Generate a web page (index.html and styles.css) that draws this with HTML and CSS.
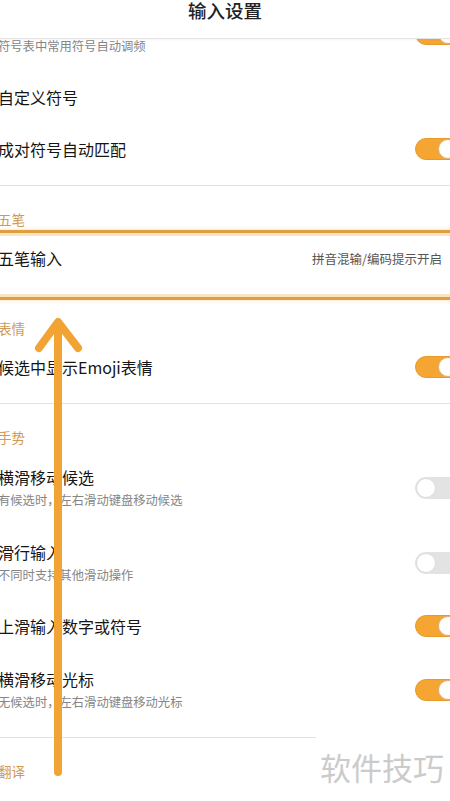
FILE: index.html
```html
<!DOCTYPE html>
<html lang="zh-CN">
  <head>
    <meta charset="UTF-8" />
    <meta name="viewport" content="width=device-width, initial-scale=1.0" />
    <title>输入设置</title>
    <link rel="stylesheet" href="styles.css">
  </head>
  <body>
    <div class="screen">
      <header class="topbar">输入设置</header>

      <div class="settings">
        <section class="group">
          <div class="row row-tall">
            <div class="text">
              <div class="title">符号自动调频</div>
              <div class="sub">符号表中常用符号自动调频</div>
            </div>
            <span class="switch on"></span>
          </div>
          <div class="row">
            <div class="text"><div class="title">自定义符号</div></div>
            <span class="chevron"></span>
          </div>
          <div class="row">
            <div class="text"><div class="title">成对符号自动匹配</div></div>
            <span class="switch on"></span>
          </div>
        </section>

        <section class="group">
          <div class="group-label">五笔</div>
          <div class="row highlighted">
            <div class="text"><div class="title">五笔输入</div></div>
            <span class="value">拼音混输/编码提示开启</span>
            <span class="chevron"></span>
          </div>
        </section>

        <section class="group">
          <div class="group-label">表情</div>
          <div class="row">
            <div class="text"><div class="title">候选中显示Emoji表情</div></div>
            <span class="switch on"></span>
          </div>
        </section>

        <section class="group">
          <div class="group-label">手势</div>
          <div class="row row-tall">
            <div class="text">
              <div class="title">横滑移动候选</div>
              <div class="sub">有候选时，左右滑动键盘移动候选</div>
            </div>
            <span class="switch"></span>
          </div>
          <div class="row row-tall">
            <div class="text">
              <div class="title">滑行输入</div>
              <div class="sub">不同时支持其他滑动操作</div>
            </div>
            <span class="switch"></span>
          </div>
          <div class="row">
            <div class="text"><div class="title">上滑输入数字或符号</div></div>
            <span class="switch on"></span>
          </div>
          <div class="row row-tall">
            <div class="text">
              <div class="title">横滑移动光标</div>
              <div class="sub">无候选时，左右滑动键盘移动光标</div>
            </div>
            <span class="switch on"></span>
          </div>
        </section>

        <section class="group last">
          <div class="group-label">翻译</div>
          <div class="row">
            <div class="text"><div class="title">中英翻译</div></div>
            <span class="chevron"></span>
          </div>
        </section>
      </div>

      <!-- hand drawn arrow on top of the screenshot -->
      <svg class="arrow" width="450" height="801" viewBox="0 0 450 801">
        <path d="M58 772 L58 326" />
        <path d="M39 348 L58 322 L78 348" />
      </svg>

      <div class="watermark">软件技巧</div>
    </div>
  </body>
</html>
```

FILE: styles.css
```css
html,
body {
  margin: 0;
  padding: 0;
  background: #fff;
  overflow: hidden;
}
body {
  font-family: "Noto Sans CJK SC", "Noto Sans", sans-serif;
  color: #151515;
}
.screen {
  position: relative;
  width: 450px;
  height: 801px;
  overflow: hidden;
  background: #fff;
}
.topbar {
  position: relative;
  z-index: 2;
  box-sizing: border-box;
  height: 39px;
  line-height: 20px;
  text-align: center;
  font-size: 18.5px;
  font-weight: 500;
  color: #222;
  background: #fff;
  border-bottom: 1px solid #e4e4e4;
  box-shadow: 0 1px 2px rgba(0, 0, 0, 0.04);
}
.settings {
  margin-top: -43px;
  margin-left: -2px;
}
.group {
  padding-bottom: 10px;
  border-bottom: 1px solid #e3e3e3;
}
.group.last {
  border-bottom: none;
}
.group-label {
  padding: 23px 0 3px;
  line-height: 20px;
  font-size: 13.5px;
  color: #cf9a55;
}
.row {
  display: flex;
  align-items: center;
  height: 52px;
}
.row-tall {
  height: 75px;
}
.text {
  flex: 1;
}
.title {
  font-size: 16px;
  line-height: 22px;
}
.sub {
  margin-top: 2px;
  font-size: 12.3px;
  line-height: 20px;
  color: #858585;
}
.value {
  margin-right: 5px;
  font-size: 12.5px;
  color: #555;
}
.chevron {
  width: 8px;
  height: 8px;
  margin-right: -5px;
  box-sizing: border-box;
  border-top: 1.5px solid #c4c4c4;
  border-right: 1.5px solid #c4c4c4;
  transform: rotate(45deg);
}
.switch {
  position: relative;
  box-sizing: border-box;
  width: 45px;
  height: 22px;
  margin-right: -10px;
  border-radius: 11px;
  background: #e3e3e3;
}
.switch::after {
  content: "";
  position: absolute;
  top: 1px;
  left: 1px;
  box-sizing: border-box;
  width: 20px;
  height: 20px;
  border-radius: 50%;
  background: #fff;
  border: 1px solid #dcdcdc;
}
.switch.on {
  background: #f5a632;
  border: 1px solid #e69a2c;
}
.switch.on::after {
  top: 0;
  left: auto;
  right: 1px;
  border-color: #d9b07a;
}
.highlighted {
  position: relative;
}
.highlighted::after {
  content: "";
  position: absolute;
  top: -2px;
  bottom: -16px;
  left: -10px;
  right: -10px;
  border: 3px solid #dd9e44;
  box-shadow: inset 0 0 0 3px #f8e5c0, 0 0 4px rgba(240, 175, 80, 0.45);
  pointer-events: none;
}
.arrow {
  position: absolute;
  top: 0;
  left: 0;
  z-index: 3;
  pointer-events: none;
}
.arrow path {
  fill: none;
  stroke: #f1a434;
  stroke-width: 8;
  stroke-linecap: round;
  stroke-linejoin: round;
}
.watermark {
  position: absolute;
  left: 316px;
  top: 725px;
  right: 0;
  bottom: 0;
  z-index: 3;
  box-sizing: border-box;
  padding: 24px 0 0 4px;
  background: #fff;
  font-size: 31px;
  line-height: 36px;
  color: #cbcbcb;
  white-space: nowrap;
}
```
